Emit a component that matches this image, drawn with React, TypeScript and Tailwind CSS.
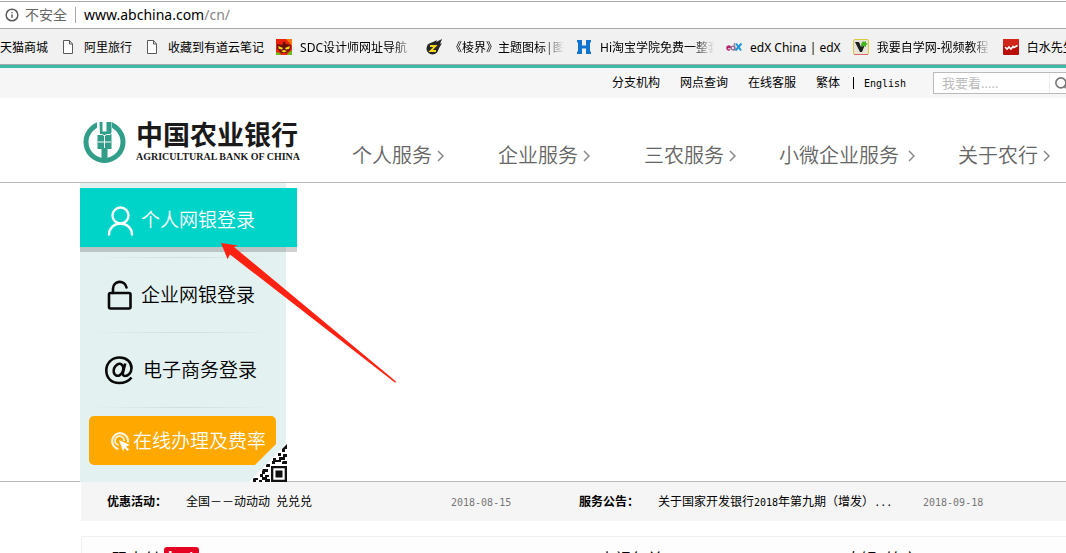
import React from 'react';
import { Info, Search } from 'lucide-react';

type Bookmark = { label: string; icon?: React.ReactNode; clipped?: boolean };

const FileIcon = () => (
  <svg width="16" height="16" viewBox="0 0 16 16" fill="none" stroke="#5a5a5a" className="shrink-0">
    <path d="M3.5 1.5h6l3 3.5v9.5h-9z" fill="#fff" />
    <path d="M9.5 1.5V5h3" />
  </svg>
);

const MaskIcon = () => (
  <svg width="16" height="16" viewBox="0 0 16 16" className="shrink-0">
    <rect width="16" height="16" fill="#e8240c" />
    <path d="M10 0h6v7z" fill="#f47a10" />
    <path d="M1 5l5 1 2-4 2 3 5 1-1 5-4 3H5l-4-5z" fill="#6b100a" />
    <path d="M2 7l5 2-1 1.500-3-.5zM14 7L9 9l1 1.500 3-.5zM5 12l3-1 3 1-3 1.500z" fill="#f6e21a" />
    <path d="M0 13l4 1 1 2H0zM12 14l4-3v5h-5z" fill="#6dbb1e" />
  </svg>
);

const ZIcon = () => (
  <svg width="16" height="16" viewBox="0 0 16 16" className="shrink-0">
    <circle cx="6.5" cy="9.500" r="6" fill="#262626" />
    <path d="M5 4l6-3-1 2 6-3-2 5 2-1-4 7z" fill="#262626" />
    <path d="M4 7h5.500L4.500 12H10" fill="none" stroke="#f4d51c" strokeWidth="1.800" />
  </svg>
);

const HIcon = () => (
  <svg width="16" height="16" viewBox="0 0 16 16" className="shrink-0">
    <path d="M1 1h5v5.500h4V1h5v2.500h-1v9h1V15h-5V9.500H6V15H1v-2.500h1v-9H1z" fill="#1173d0" />
  </svg>
);

const EdxIcon = () => (
  <svg width="16" height="16" viewBox="0 0 16 16" fill="none" className="shrink-0">
    <path d="M1 8.500h3.500a1.800 2 0 1 0-.6 2" stroke="#b3256b" strokeWidth="1.500" />
    <path d="M8.500 4v7.500" stroke="#8f8fa0" strokeWidth="1.500" />
    <circle cx="7" cy="9" r="1.900" stroke="#8f6b93" strokeWidth="1.400" />
    <path d="M10 4.500l5 7M15.500 4.500l-6 7" stroke="#1e96dc" strokeWidth="2" />
  </svg>
);

const VIcon = () => (
  <svg width="16" height="16" viewBox="0 0 16 16" className="shrink-0">
    <rect x=".5" y=".5" width="15" height="15" rx="1.500" fill="#e9e4da" stroke="#d9c93c" />
    <path d="M1 15.500h14" stroke="#d66" />
    <path d="M2 3h4l2 5 2-5h3L9 13H7z" fill="#1c2320" />
    <path d="M8 5l2-3 1 1 2-1v2l2 1-2 1v2l-2-1-2 1z" fill="#45b51d" />
  </svg>
);

const WaveIcon = () => (
  <svg width="16" height="16" viewBox="0 0 16 16" className="shrink-0">
    <rect width="16" height="16" rx="1" fill="#b90f08" />
    <rect width="16" height="7" rx="1" fill="#d3261a" />
    <path d="M2 8l2 2 2-2 2 2 2-2.500 1 1 3.500-2" fill="none" stroke="#fff" strokeWidth="1.600" />
  </svg>
);

const bookmarks: Bookmark[] = [
  { label: '天猫商城' },
  { label: '阿里旅行', icon: <FileIcon /> },
  { label: '收藏到有道云笔记', icon: <FileIcon /> },
  { label: 'SDC设计师网址导航', icon: <MaskIcon />, clipped: true },
  { label: '《棱界》主题图标|图', icon: <ZIcon />, clipped: true },
  { label: 'Hi淘宝学院免费一整套', icon: <HIcon />, clipped: true },
  { label: 'edX China | edX', icon: <EdxIcon /> },
  { label: '我要自学网-视频教程', icon: <VIcon />, clipped: true },
  { label: '白水先生', icon: <WaveIcon /> },
];

const navItems = [
  { label: '个人服务' },
  { label: '企业服务' },
  { label: '三农服务' },
  { label: '小微企业服务', wide: true },
  { label: '关于农行' },
];

const notices = [
  { title: '优惠活动：', text: <>全国－－动动动<Mono> </Mono>兑兑兑</>, date: '2018-08-15' },
  {
    title: '服务公告：',
    text: (
      <>
        关于国家开发银行<Mono>2018</Mono>年第九期（增发）<Mono>...</Mono>
      </>
    ),
    date: '2018-09-18',
  },
];

function Mono({ children }: { children: React.ReactNode }) {
  return <span className="font-['DejaVu_Sans_Mono',monospace] text-[10px]">{children}</span>;
}

function BankEmblem() {
  return (
    <svg width="43" height="42" viewBox="0 0 43 42" className="shrink-0">
      <circle cx="21.500" cy="21" r="18.500" fill="none" stroke="#319e8a" strokeWidth="5" />
      <path d="M14 0h15v6l1.500 8v14l-5 1.500V36h-8v-6.500l-5-1.500V14L14 6z" fill="#fff" />
      <path
        d="M16.500 1h3v9.500h4V1h5v10.500l-1 1.500h1V28h-4v13.500h-6V28h-4V14h2.500z"
        fill="#319e8a"
      />
      <path d="M21.500 14v13M15 21h13M16.500 13.500h3l2 1.500 2-1.500h4" fill="none" stroke="#fff" strokeWidth="1" />
    </svg>
  );
}

function Chevron() {
  return (
    <svg width="7" height="12" viewBox="0 0 7 12" fill="none" stroke="#888" strokeWidth="1.500">
      <path d="M1 1l5 5-5 5" />
    </svg>
  );
}

function UserIcon() {
  return (
    <svg width="30" height="30" viewBox="0 0 30 30" fill="none" stroke="#fff" strokeWidth="2.400" strokeLinecap="round">
      <circle cx="16.500" cy="9.500" r="8" />
      <path d="M5 28.500a11.500 11 0 0 1 23 0" />
    </svg>
  );
}

function LockIcon() {
  return (
    <svg width="30" height="30" viewBox="0 0 30 30" fill="none" stroke="#0a0a0a" strokeWidth="2.600" strokeLinecap="round">
      <rect x="5" y="13" width="21.500" height="15.500" rx="1.500" />
      <path d="M9 13V8.500a6.800 6.800 0 0 1 13.500-1" />
    </svg>
  );
}

function AtIcon() {
  return (
    <svg width="30" height="30" viewBox="0 0 30 30" fill="none" stroke="#0a0a0a" strokeWidth="2.600">
      <path d="M27.500 22.500C24.500 26.500 20 28 15 28 7.500 28 2.300 23 2.300 15.500 2.300 8 8 2.500 15.500 2.500 22.500 2.500 27.500 7 27.500 13c0 5-3.500 8-6.500 8-2 0-2.500-1.500-2-3.500l2.200-9" />
      <ellipse cx="14.500" cy="14.800" rx="4.600" ry="6.200" transform="rotate(22 14.500 14.800)" />
    </svg>
  );
}

function ClickIcon() {
  return (
    <svg width="21" height="21" viewBox="0 0 21 21" fill="none" stroke="#fff3d8">
      <path d="M8.500 18A8 8 0 1 1 18 11.500" strokeWidth="2.200" />
      <path d="M8.500 14A4.500 4.500 0 1 1 14 10" strokeWidth="1.800" />
      <path d="M9 9l11 5-4 1.500 3 3-1.500 1.500-3-3L13 20z" fill="#fff" stroke="none" />
    </svg>
  );
}

function QrCorner() {
  return (
    <svg width="38" height="42" viewBox="0 0 38 42" className="absolute -right-px bottom-0">
      <path d="M27 4v21H6z" fill="#e3f1f0" />
      <path d="M38 3v39H0z" fill="#fff" />
      <path
        d="M22 26h16v16H22zM24.300 28.300v11.400h11.400V28.300zM26.500 30.500h7v7h-7zM33 9l5-5v5h-2v3h-3zM29 13h3v3h-3zM34 14h4v3h-2v3h-4v-3h2zM24 18h3v2h3v-3h2v5h-6v2h-3v-3h1zM34 21h4v3h-5v-2zM18 24h3v3h-4v-2zM14 29h5v3h-3v2h-3v-3zM11 34h3v3h-3zM16 35h4v2h-2v2h3v3h-5v-2h-3v-3h3zM5 38h4v2H7v2H4v-3zM10 40h3v2h-3z"
        fill="#111"
        fillRule="evenodd"
      />
    </svg>
  );
}

function Divider() {
  return <div className="mx-2.5 h-px bg-linear-to-r from-transparent via-[#cfdfde] to-transparent" />;
}

export default function App() {
  return (
    <div className="h-screen overflow-hidden bg-white font-['Noto_Sans','Noto_Sans_CJK_SC',sans-serif] text-black">
      {/* Address bar */}
      <div className="mt-px flex h-7 items-center border-y border-[#a9a9a9] pl-[5px] text-sm">
        <Info size={14} color="#5a5a5a" strokeWidth={2.5} />
        <span className="ml-1.5 text-[#666]">不安全</span>
        <span className="mx-2 h-4 w-px bg-[#aaa]" />
        <span>
          www.abchina.com<span className="text-[#888]">/cn/</span>
        </span>
      </div>

      {/* Bookmarks */}
      <div className="flex h-9 items-center gap-3 border-b border-[#a9a9a9] bg-[#f1f1f1] text-xs">
        {bookmarks.map((b) => (
          <a key={b.label} href="#" className="flex shrink-0 items-center gap-2 whitespace-nowrap">
            {b.icon}
            <span className={b.clipped ? 'w-[114px] overflow-hidden pt-0.5 mask-r-from-82%' : 'pt-0.5'}>
              {b.label}
            </span>
          </a>
        ))}
      </div>

      {/* Utility bar */}
      <div className="border-t-3 border-[#3cbba9] bg-[#f6f6f6] pl-20">
        <div className="flex h-[30px] w-[1000px] items-center justify-end text-xs">
          <div className="flex gap-5">
            <a href="#">分支机构</a>
            <a href="#">网点查询</a>
            <a href="#">在线客服</a>
            <a href="#">繁体</a>
          </div>
          <span className="mr-2.5 ml-[13px] h-3 w-px bg-black" />
          <a href="#" className="w-[69px]">
            <Mono>English</Mono>
          </a>
          <form className="flex h-[22px] w-[147px] items-center border border-[#bbb] bg-white">
            <input
              type="text"
              aria-label="搜索"
              placeholder="我要看....."
              className="h-full w-[116px] border-r border-[#eee] pl-2 text-[13px] outline-none placeholder:text-[#bbb]"
            />
            <button type="submit" aria-label="提交" className="pl-1">
              <Search size={15} color="#777" strokeWidth={2.5} />
            </button>
          </form>
        </div>
      </div>

      {/* Logo and main navigation */}
      <header className="border-b border-[#bbb] pl-20">
        <div className="flex h-[84px] w-[1000px] items-end">
          <a href="#" className="flex w-[245px] shrink-0 items-start gap-2.5 pb-[17px] pl-[3px]">
            <BankEmblem />
            <span className="whitespace-nowrap text-[#1a1a1a]">
              <span className="block text-[27px] leading-7 font-bold">中国农业银行</span>
              <span className="block font-['Liberation_Serif',serif] text-[10px] leading-4 font-bold">
                AGRICULTURAL BANK OF CHINA
              </span>
            </span>
          </a>
          <nav className="flex shrink-0 pb-3 text-xl leading-7 font-[350] text-[#666]">
            {navItems.map((item) => (
              <a
                key={item.label}
                href="#"
                className={
                  item.wide
                    ? 'flex items-center gap-[9px] px-4 whitespace-nowrap'
                    : 'flex items-center gap-[5px] px-[27px] whitespace-nowrap'
                }
              >
                {item.label}
                <Chevron />
              </a>
            ))}
          </nav>
        </div>
      </header>

      {/* Login panel */}
      <main className="relative border-b border-[#bbb] pl-20">
        <aside className="relative -mb-px w-[206px] bg-[#e3f1f0] pt-[5px] pb-[17px] text-[19px] font-[350]">
          <a
            href="#"
            className="mb-2.5 flex h-[59px] w-[217px] items-center gap-[7px] bg-[#00d4c8] pt-1.5 pl-6 text-white shadow-[0_5px_0_rgba(0,0,0,0.18)]"
          >
            <UserIcon />
            个人网银登录
          </a>
          <Divider />
          <a href="#" className="flex h-[74px] items-center gap-[7px] pl-6">
            <LockIcon />
            企业网银登录
          </a>
          <Divider />
          <a href="#" className="flex h-[74px] items-center gap-[9px] pl-6">
            <AtIcon />
            电子商务登录
          </a>
          <Divider />
          <a
            href="#"
            className="mx-[9px] mt-2 flex h-[49px] w-[187px] items-center gap-0.5 rounded-[5px] bg-[#ffa800] pt-0.5 pl-[21px] whitespace-nowrap text-white"
          >
            <ClickIcon />
            在线办理及费率
          </a>
          <QrCorner />
        </aside>
        <svg width="178" height="142" viewBox="0 0 178 142" className="absolute top-[59px] left-[220px]">
          <path d="M1 1l17 2.500-4 1.500L176 139.500l-.8 1.200L10 12.500 7.500 17z" fill="#ff2213" />
        </svg>
      </main>

      {/* Notices */}
      <section className="pl-[81px]">
        <div className="flex h-[39px] w-[1000px] items-center bg-[#f5f5f5] pl-[26px] text-xs">
          {notices.map((n) => (
            <div key={n.date} className="flex w-[472px] shrink-0 items-center">
              <b className="w-[79px]">{n.title}</b>
              <a href="#" className="w-[265px]">
                {n.text}
              </a>
              <time className="text-[#777]">
                <Mono>{n.date}</Mono>
              </time>
            </div>
          ))}
        </div>

        {/* Products */}
        <div className="mt-[15px] flex w-[1000px] border border-[#efefef] bg-[#fdfdfd] pt-2.5 pl-5 leading-6">
          <h3 className="flex w-[497px] items-start">
            K码支付
            <span className="ml-1 rounded-[3px] bg-[#e60021] px-1 text-base leading-5 font-bold text-white">hot</span>
          </h3>
          <h3 className="w-[246px]">本视包关</h3>
          <h3>农银e管家</h3>
        </div>
      </section>
    </div>
  );
}
